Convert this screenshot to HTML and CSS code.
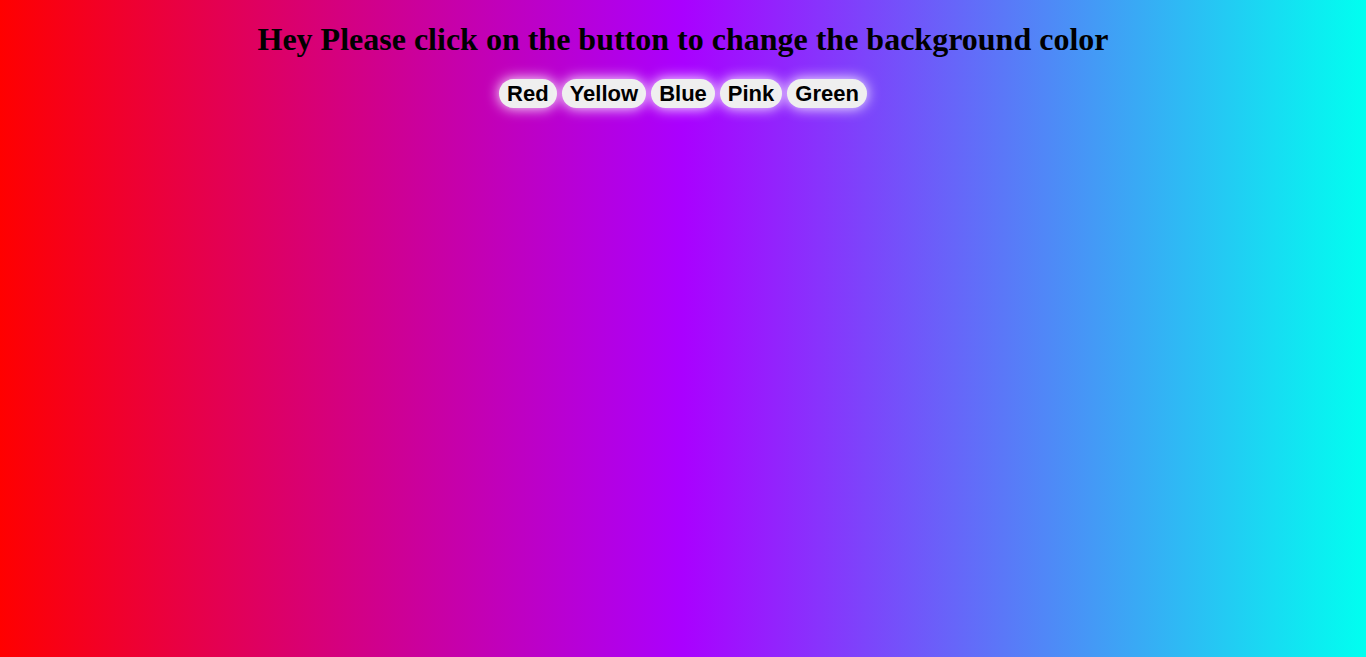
FILE: index.html
```html
<!DOCTYPE html>
<html>
<head>
<meta charset="utf-8">
<link rel="stylesheet" href="styles.css">
</head>
<body>
<h1 class="title">Hey Please click on the button to change the background color</h1>
<div class="buttons">
<button class="btn">Red</button>
<button class="btn">Yellow</button>
<button class="btn">Blue</button>
<button class="btn">Pink</button>
<button class="btn">Green</button>
</div>
</body>
</html>
```
FILE: styles.css
```css
html {
  height: 100%;
}
body {
  margin: 0;
  padding: 21px 8px 0;
  box-sizing: border-box;
  min-height: 100%;
  background: linear-gradient(to right, #ff0000, #aa00ff 50%, #00fff0);
  font-family: "Liberation Serif", "Times New Roman", serif;
  text-align: center;
}
.title {
  font-size: 32px;
  font-weight: bold;
  margin: 0 0 21px;
  line-height: 37px;
  color: #000;
}
.buttons {
  display: flex;
  justify-content: center;
  gap: 5px;
}
.btn {
  font-family: "Liberation Sans", Arial, sans-serif;
  font-size: 22px;
  font-weight: bold;
  line-height: 25px;
  padding: 2px 8px;
  border: none;
  border-radius: 15px;
  background: #efefef;
  color: #000;
  box-shadow: 0 0 14px #fff;
  cursor: pointer;
}
```
